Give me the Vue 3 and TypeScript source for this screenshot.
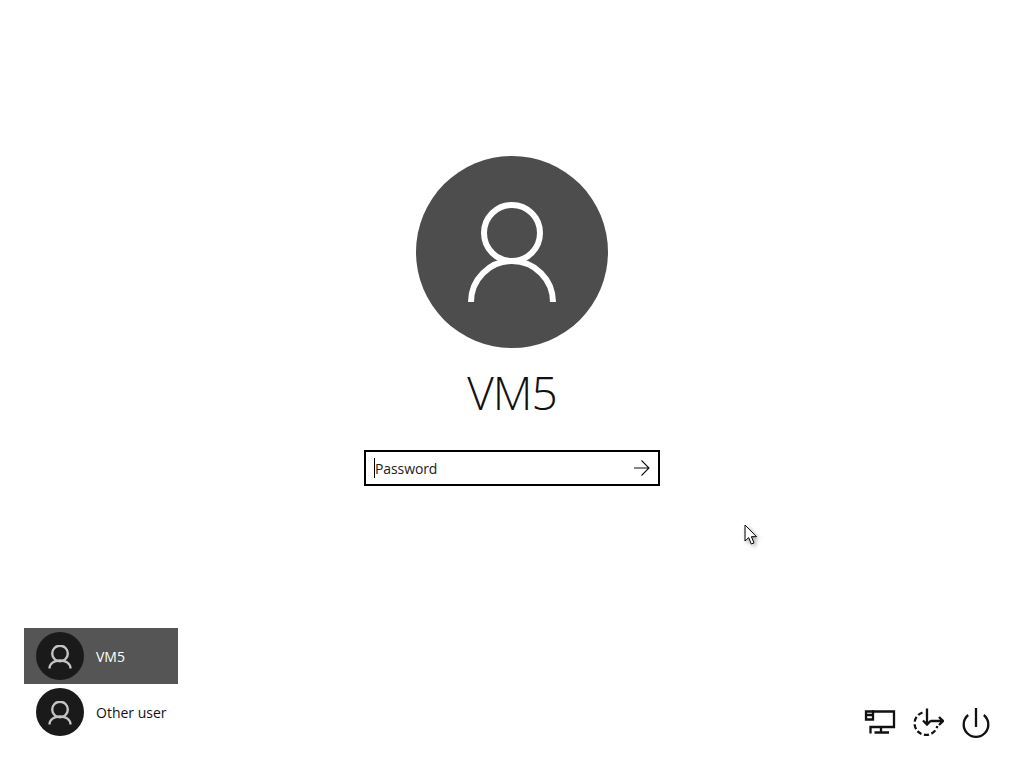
<template>
  <div class="screen">
    <main class="login">
      <div class="avatar">
        <svg class="avatar-icon" viewBox="0 0 88 104" aria-hidden="true">
          <circle cx="44" cy="33" r="28" />
          <path d="M3 102A41 41 0 0 1 85 102" />
        </svg>
      </div>
      <h1 class="name">VM5</h1>
      <div class="password">
        <span class="caret"></span>
        <span class="placeholder">Password</span>
        <svg class="submit" viewBox="0 0 16 16" aria-hidden="true">
          <path d="M0 8H15M7.5 .5L15 8L7.5 15.5" />
        </svg>
      </div>
    </main>

    <footer class="bottom">
      <ul class="users">
        <li v-for="user in users" :key="user.name" class="user" :class="{ selected: user.selected }">
          <span class="user-pic">
            <svg viewBox="0 0 24 24" aria-hidden="true">
              <circle cx="12" cy="8.5" r="7.8" />
              <path d="M1.5 23.5C1.5 18.5 6 15.5 12 15.5S22.5 18.5 22.5 23.5" />
            </svg>
          </span>
          <span class="user-name">{{ user.name }}</span>
        </li>
      </ul>
      <div class="actions">
        <svg class="action" viewBox="0 0 32 32" aria-hidden="true">
          <path d="M8 4.5H30V20H6.5V26.5M17 20V25.5M10.5 25.5H25" />
          <path d="M2 4.5H9V12.5H2ZM2 8H9" />
        </svg>
        <svg class="action" viewBox="0 0 32 32" aria-hidden="true">
          <path class="dash" d="M10.5 5.5A11.5 11.5 0 1 0 25.3 19" />
          <path d="M15 1.5V17M11 13.5L15 17.5L19 13.5M19 14H31M27 10L31 14L27 18" />
        </svg>
        <svg class="action" viewBox="0 0 32 32" aria-hidden="true">
          <path d="M16 1V20" />
          <path d="M8.2 8A12.3 12.3 0 1 0 23.8 8" />
        </svg>
      </div>
    </footer>

    <svg class="cursor" viewBox="0 0 16 24" aria-hidden="true">
      <path d="M1 1V17L4.7 13.6L7.3 20L10 18.9L7.4 12.7H12.5Z" />
    </svg>
  </div>
</template>

<script setup lang="ts">
interface User {
  name: string;
  selected: boolean;
}

const users: User[] = [
  { name: 'VM5', selected: true },
  { name: 'Other user', selected: false },
];
</script>

<style scoped>
.screen {
  position: relative;
  width: 1024px;
  height: 768px;
  display: flex;
  flex-direction: column;
  overflow: hidden;
  background: #fff;
  color: #000;
  font-family: "Open Sans", "Liberation Sans", sans-serif;
}
.login {
  flex: 1;
  display: flex;
  flex-direction: column;
  align-items: center;
  padding-top: 156px;
}
.avatar {
  width: 192px;
  height: 192px;
  border-radius: 50%;
  background: #4d4d4d;
  display: flex;
  align-items: center;
  justify-content: center;
}
.avatar-icon {
  width: 88px;
  height: 104px;
  fill: none;
  stroke: #fff;
  stroke-width: 6;
}
.name {
  margin: 16px 0 0;
  height: 68px;
  font-size: 46px;
  line-height: 56px;
  font-weight: 300;
  letter-spacing: -1px;
  color: #111;
}
.password {
  width: 296px;
  height: 36px;
  box-sizing: border-box;
  border: 2px solid #000;
  display: flex;
  align-items: center;
  padding: 0 8px;
  margin-top: 18px;
}
.caret {
  width: 1px;
  height: 20px;
  background: #000;
}
.placeholder {
  flex: 1;
  font-size: 14px;
  letter-spacing: -0.1px;
  color: #222;
}
.submit {
  width: 16px;
  height: 16px;
  fill: none;
  stroke: #111;
  stroke-width: 1.1;
}
.bottom {
  display: flex;
  justify-content: space-between;
  align-items: flex-end;
  padding: 0 32px 28px 24px;
}
.users {
  list-style: none;
  margin: 0;
  padding: 0;
}
.user {
  width: 154px;
  height: 56px;
  box-sizing: border-box;
  display: flex;
  align-items: center;
  gap: 12px;
  padding-left: 12px;
  font-size: 14px;
  color: #111;
}
.user.selected {
  background: #555;
  color: #fff;
}
.user-pic {
  width: 48px;
  height: 48px;
  border-radius: 50%;
  background: #1a1a1a;
  display: flex;
  align-items: center;
  justify-content: center;
}
.user-pic svg {
  width: 24px;
  height: 24px;
  margin-top: 2px;
  fill: none;
  stroke: #c4c4c4;
  stroke-width: 2.4;
}
.actions {
  display: flex;
  gap: 16px;
  margin-bottom: 1px;
}
.action {
  width: 32px;
  height: 32px;
  fill: none;
  stroke: #111;
  stroke-width: 2.3;
}
.dash {
  stroke-dasharray: 5 2.5;
}
.cursor {
  position: absolute;
  left: 744px;
  top: 524px;
  width: 16px;
  height: 24px;
  fill: #fff;
  stroke: #000;
  stroke-width: 1;
  filter: drop-shadow(2px 2px 2px rgba(0, 0, 0, 0.35));
}
</style>
